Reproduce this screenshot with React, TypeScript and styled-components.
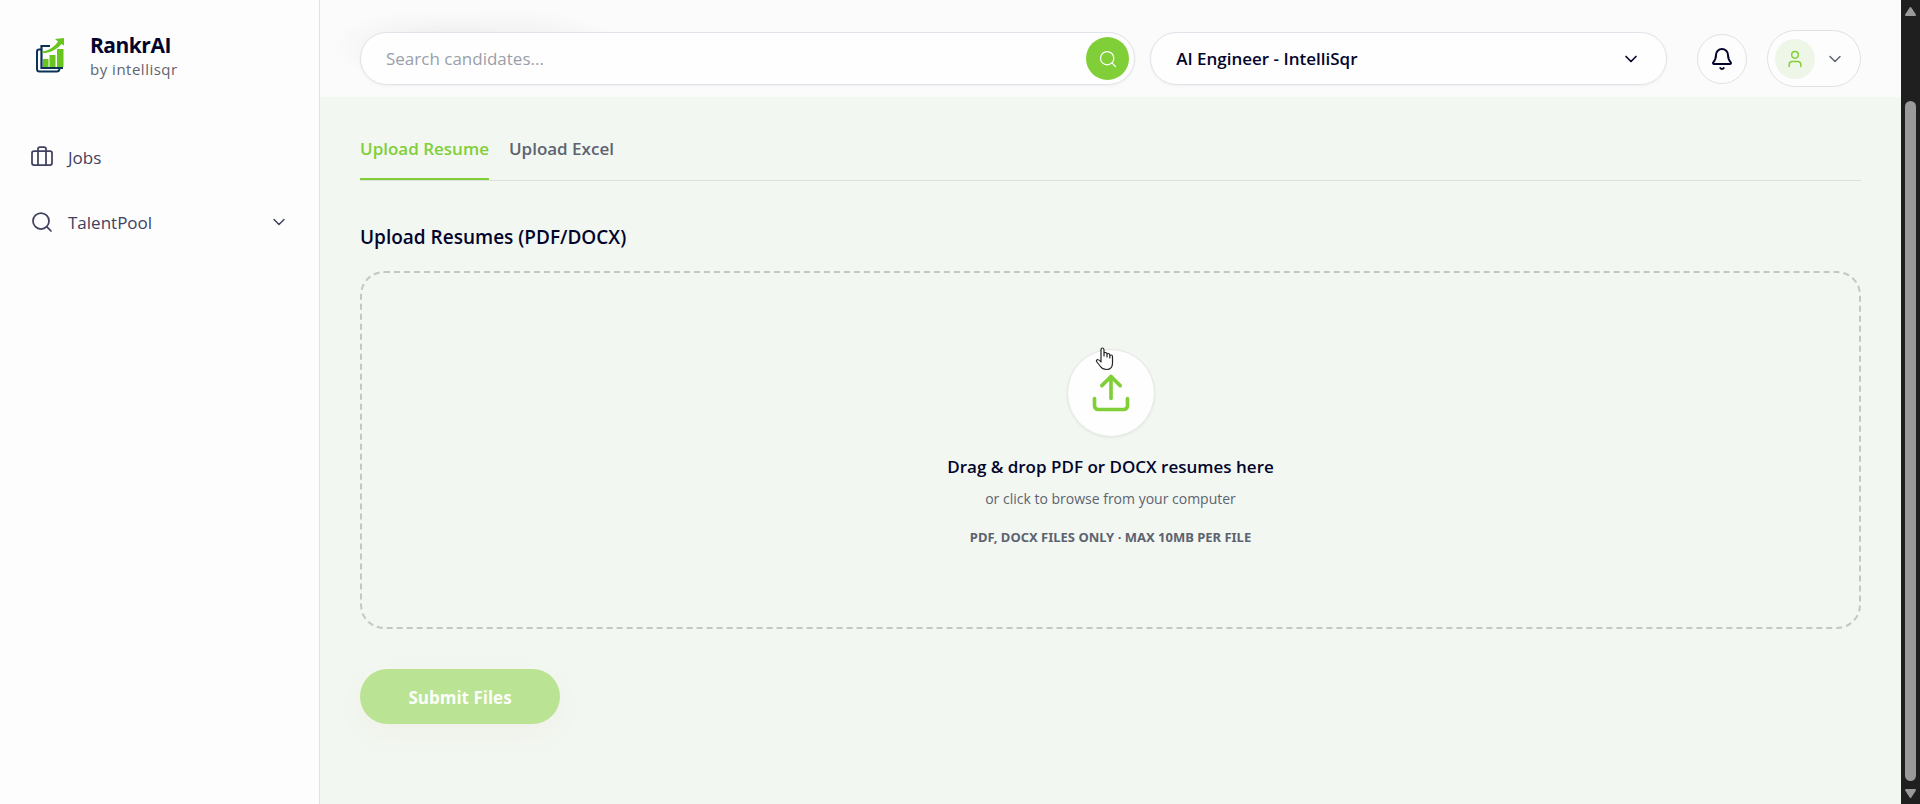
import React from "react";
import styled, { createGlobalStyle, css } from "styled-components";
import { Bell, Briefcase, ChevronDown, Search, Upload, User } from "lucide-react";

const GlobalStyle = createGlobalStyle`
  * { box-sizing: border-box; }
  html { scrollbar-width: none; }
  body {
    margin: 0;
    font-family: "Open Sans", "Noto Sans", sans-serif;
    color: #03042c;
    background: #f2f7f1;
  }
  button, input, select { font: inherit; color: inherit; }
  h1, h2, p { margin: 0; }
`;

const Shell = styled.div`
  display: flex;
  min-height: 100vh;
`;

const Sidebar = styled.aside`
  flex: 0 0 320px;
  padding: 32px 24px;
  background: #fdfdfd;
  border-right: 1px solid #e1e4de;
`;

const Brand = styled.a`
  display: flex;
  align-items: center;
  gap: 24px;
  padding: 0 10px;
  color: inherit;
  text-decoration: none;
`;

const BrandName = styled.strong`
  display: block;
  font-size: 21px;
  line-height: 26px;
  font-weight: 700;
  letter-spacing: -0.5px;
`;

const BrandOwner = styled.span`
  display: block;
  font-size: 15px;
  line-height: 22px;
  font-weight: 500;
  letter-spacing: 0.5px;
  color: #5d6370;
`;

const Nav = styled.nav`
  display: flex;
  flex-direction: column;
  gap: 17px;
  margin-top: 53px;
`;

const NavItem = styled.a`
  display: flex;
  align-items: center;
  gap: 14px;
  height: 48px;
  padding: 0 6px;
  font-size: 17px;
  font-weight: 500;
  color: #3f415f;
  text-decoration: none;
`;

const NavLabel = styled.span`
  flex: 1;
`;

const Main = styled.main`
  flex: 1;
  min-width: 0;
`;

const Header = styled.header`
  display: flex;
  align-items: center;
  height: 97px;
  padding: 20px 40px 0;
  background:
    radial-gradient(ellipse 90px 36px at 100px 46px, rgba(40, 40, 60, 0.06), transparent),
    radial-gradient(ellipse 110px 36px at 190px 44px, rgba(40, 40, 60, 0.06), transparent),
    #fbfbfb;
`;

const Fields = styled.div`
  flex: 1;
  display: grid;
  grid-template-columns: 3fr 2fr;
  gap: 15px;
  margin-right: 30px;
`;

const field = css`
  height: 53px;
  border: 1px solid #dfe3e9;
  border-radius: 27px;
  background: #fefefe;
  box-shadow: 0 1px 3px rgba(20, 30, 60, 0.05);
`;

const SearchForm = styled.form`
  ${field}
  display: flex;
  align-items: center;
  padding: 0 5px 0 25px;
`;

const SearchInput = styled.input`
  flex: 1;
  min-width: 0;
  padding: 0;
  border: 0;
  outline: 0;
  background: none;
  font-size: 17px;
  font-weight: 500;
  &::placeholder { color: #9a9ea9; opacity: 1; }
`;

const SearchButton = styled.button`
  display: grid;
  place-items: center;
  width: 43px;
  height: 43px;
  padding: 0;
  border: 0;
  border-radius: 50%;
  background: #80cf38;
  color: #fff;
`;

const JobPicker = styled.div`
  ${field}
  display: grid;
  align-items: center;
  > * { grid-area: 1 / 1; }
  > svg {
    justify-self: end;
    margin-right: 25px;
    pointer-events: none;
  }
`;

const JobSelect = styled.select`
  width: 100%;
  height: 100%;
  padding: 0 25px;
  border: 0;
  border-radius: 27px;
  outline: 0;
  appearance: none;
  background: none;
  font-size: 17px;
  font-weight: 600;
`;

const BellButton = styled.button`
  display: grid;
  place-items: center;
  width: 50px;
  height: 50px;
  margin-right: 20px;
  padding: 0;
  border: 1px solid #e1e2de;
  border-radius: 50%;
  background: #fdfdfd;
`;

const ProfileButton = styled.button`
  display: flex;
  align-items: center;
  gap: 10px;
  width: 94px;
  height: 57px;
  padding: 0 7px;
  border: 1px solid #e1e2de;
  border-radius: 29px;
  background: #fdfdfd;
  color: #5d6370;
`;

const Avatar = styled.span`
  display: grid;
  place-items: center;
  width: 40px;
  height: 40px;
  border-radius: 50%;
  background: #eef7e7;
  color: #80cf38;
`;

const Content = styled.section`
  padding: 34px 40px 40px;
`;

const Tabs = styled.div`
  display: flex;
  gap: 20px;
  border-bottom: 1px solid #dce1da;
`;

const Tab = styled.button<{ $active?: boolean }>`
  height: 49px;
  padding: 0 0 13px;
  border: 0;
  border-bottom: 2px solid ${(p) => (p.$active ? "#80cf38" : "transparent")};
  background: none;
  font-size: 17px;
  font-weight: 600;
  color: ${(p) => (p.$active ? "#80cf38" : "#5d6370")};
`;

const Title = styled.h1`
  margin: 42px 0 20px;
  font-size: 19px;
  line-height: 28px;
  font-weight: 600;
`;

const DropZone = styled.label`
  display: flex;
  flex-direction: column;
  align-items: center;
  padding: 76px 20px 79px;
  border: 2px dashed #c3c8c1;
  border-radius: 24px;
  text-align: center;
  cursor: pointer;
`;

const FileInput = styled.input`
  display: none;
`;

const UploadBadge = styled.span`
  position: relative;
  display: grid;
  place-items: center;
  width: 88px;
  height: 88px;
  margin-bottom: 17px;
  border: 1px solid #e6e8e4;
  border-radius: 50%;
  background: #fefefe;
  box-shadow: 0 1px 3px rgba(0, 0, 0, 0.06);
  color: #80cf38;
`;

const Pointer = styled.svg`
  position: absolute;
  top: -3px;
  left: 27px;
`;

const DropHeading = styled.span`
  font-size: 17px;
  line-height: 26px;
  font-weight: 600;
`;

const DropText = styled.span`
  margin-top: 8px;
  font-size: 14px;
  line-height: 22px;
  color: #5d6370;
`;

const DropHint = styled.span`
  margin-top: 16px;
  font-family: "Noto Sans", "Open Sans", sans-serif;
  font-size: 13px;
  line-height: 22px;
  font-weight: 700;
  color: #5d6370;
  text-transform: uppercase;
`;

const SubmitButton = styled.button`
  width: 200px;
  height: 55px;
  margin-top: 40px;
  padding: 2px 0 0;
  border: 0;
  border-radius: 28px;
  background: #bae393;
  box-shadow: 0 10px 24px rgba(225, 130, 90, 0.05);
  font-size: 17px;
  font-weight: 700;
  color: #fdfffb;
`;

const Scrollbar = styled.div`
  position: sticky;
  top: 0;
  flex: 0 0 19px;
  display: flex;
  flex-direction: column;
  align-items: center;
  height: 100vh;
  padding: 6px 0 5px;
  background: #1f1f1f;
`;

const Thumb = styled.div`
  flex: 1;
  width: 11px;
  margin: 85px 0 8px;
  border-radius: 6px;
  background: #9a9a9a;
`;

const Logo = () => (
  <svg width="32" height="38" viewBox="0 0 32 38" fill="none" aria-hidden="true">
    <path d="M7 12.500H5Q3 12.500 3 14.500V32Q3 34.500 5.500 34.500H23Q25 34.500 25.500 32" stroke="#0b3358" strokeWidth="2" />
    <path d="M16 9H7.500V31H29" stroke="#0b3358" strokeWidth="2.200" />
    <path d="M9 22h5.500v8H9zM15.500 18h6v12h-6zM23 12h6.500v18H23z" fill="#68c51d" />
    <path d="M8.500 14.500C15 13.500 21 9.500 24 4.500L21 2L30 1V8.500L27.500 7C23 12.500 16 16 8.500 16.200Z" fill="#68c51d" />
  </svg>
);

const HandPointer = () => (
  <Pointer width="19" height="24" viewBox="0 0 19 24" aria-hidden="true">
    <path
      d="M6 14V3Q6 1 7.500 1T9 3V9V6.500Q9 5.500 10.500 5.500T12 7V10V7.500Q12 6.500 13.300 6.500T14.800 8V11V9Q15 8 16.200 8T17.500 9.500V16Q17.500 22.500 11.500 22.500Q7.500 22.500 5.500 19.500L1.500 14.500Q1 13 2.500 12.500Q4 12.500 6 15Z"
      fill="#fff"
      stroke="#222"
      strokeWidth="1.200"
      strokeLinejoin="round"
    />
  </Pointer>
);

const Arrow = ({ down = false }: { down?: boolean }) => (
  <svg width="13" height="10" viewBox="0 0 13 10" aria-hidden="true">
    <path
      d={down ? "M2 1h9L6.500 8z" : "M2 9h9L6.500 2z"}
      fill="#9a9a9a"
      stroke="#9a9a9a"
      strokeWidth="2"
      strokeLinejoin="round"
    />
  </svg>
);

export default function App() {
  return (
    <>
      <GlobalStyle />
      <Shell>
        <Sidebar>
          <Brand href="#">
            <Logo />
            <span>
              <BrandName>RankrAI</BrandName>
              <BrandOwner>by intellisqr</BrandOwner>
            </span>
          </Brand>
          <Nav>
            <NavItem href="#">
              <Briefcase size={24} strokeWidth={1.75} />
              <NavLabel>Jobs</NavLabel>
            </NavItem>
            <NavItem href="#">
              <Search size={24} strokeWidth={1.75} />
              <NavLabel>TalentPool</NavLabel>
              <ChevronDown size={20} strokeWidth={1.75} />
            </NavItem>
          </Nav>
        </Sidebar>
        <Main>
          <Header>
            <Fields>
              <SearchForm role="search" onSubmit={(e) => e.preventDefault()}>
                <SearchInput type="text" aria-label="Search candidates" placeholder="Search candidates..." />
                <SearchButton aria-label="Search">
                  <Search size={20} strokeWidth={1.5} />
                </SearchButton>
              </SearchForm>
              <JobPicker>
                <JobSelect aria-label="Job">
                  <option>AI Engineer - IntelliSqr</option>
                </JobSelect>
                <ChevronDown size={20} />
              </JobPicker>
            </Fields>
            <BellButton type="button" aria-label="Notifications">
              <Bell size={24} />
            </BellButton>
            <ProfileButton type="button" aria-label="Account">
              <Avatar>
                <User size={20} strokeWidth={1.75} />
              </Avatar>
              <ChevronDown size={20} strokeWidth={1.75} />
            </ProfileButton>
          </Header>
          <Content>
            <Tabs role="tablist">
              <Tab type="button" role="tab" aria-selected $active>Upload Resume</Tab>
              <Tab type="button" role="tab" aria-selected={false}>Upload Excel</Tab>
            </Tabs>
            <Title>Upload Resumes (PDF/DOCX)</Title>
            <DropZone>
              <FileInput type="file" multiple accept=".pdf,.docx" />
              <UploadBadge>
                <Upload size={44} />
                <HandPointer />
              </UploadBadge>
              <DropHeading>Drag &amp; drop PDF or DOCX resumes here</DropHeading>
              <DropText>or click to browse from your computer</DropText>
              <DropHint>PDF, DOCX files only · Max 10MB per file</DropHint>
            </DropZone>
            <SubmitButton type="button" disabled>Submit Files</SubmitButton>
          </Content>
        </Main>
        <Scrollbar aria-hidden="true">
          <Arrow />
          <Thumb />
          <Arrow down />
        </Scrollbar>
      </Shell>
    </>
  );
}
